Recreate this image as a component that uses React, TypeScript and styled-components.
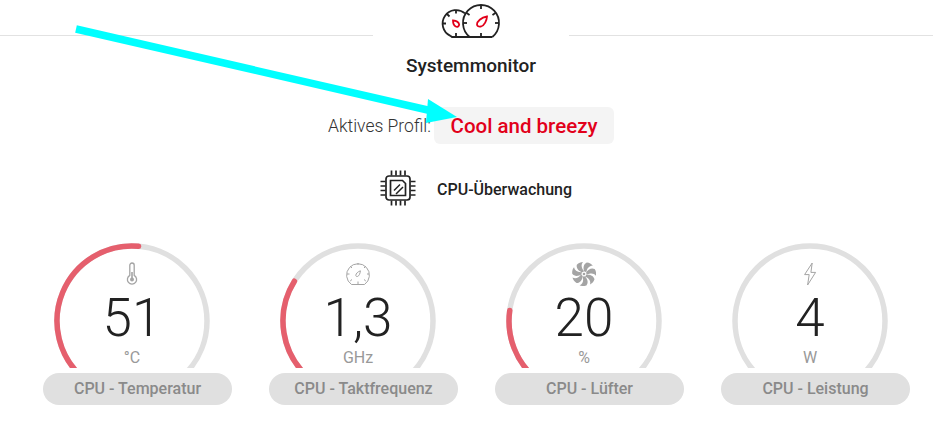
import React from "react";
import styled, { createGlobalStyle } from "styled-components";

const Global = createGlobalStyle`
  html, body { margin: 0; padding: 0; background: #fff; }
  body { font-family: Roboto, "Noto Sans", Arial, sans-serif; color: #222; }
  #root { width: 933px; height: 436px; overflow: hidden; }
`;

const Page = styled.div`
  position: relative;
  width: 933px;
  height: 436px;
  overflow: hidden;
`;

const Arrow = styled.svg`
  position: absolute;
  left: 0;
  top: 0;
  pointer-events: none;
  z-index: 2;
`;

const Header = styled.header`
  display: grid;
  grid-template-columns: 373px 196px 1fr;
  height: 107px;
`;

const Rule = styled.div`
  margin-top: 35px;
  height: 1px;
  background: #e2e2e2;
`;

const HeaderCenter = styled.div`
  padding-top: 4px;
  display: flex;
  flex-direction: column;
  align-items: center;
`;

const Title = styled.h1`
  margin: 16px 0 0;
  font-size: 19px;
  line-height: 24px;
  font-weight: 500;
  color: #222;
`;

const ProfileRow = styled.div`
  display: flex;
  align-items: center;
  height: 37px;
  padding-left: 328px;
`;

const ProfileLabel = styled.span`
  width: 106px;
  font-size: 17.5px;
  font-weight: 300;
  color: #333;
  white-space: nowrap;
`;

const ProfilePill = styled.div`
  width: 180px;
  height: 37px;
  box-sizing: border-box;
  background: #f4f4f4;
  border-radius: 6px;
  display: flex;
  align-items: center;
  justify-content: center;
  font-size: 20.5px;
  font-weight: 500;
  color: #e2001a;
`;

const SectionRow = styled.div`
  display: flex;
  align-items: center;
  height: 36px;
  margin-top: 26px;
  padding-left: 380px;
  gap: 21px;
`;

const SectionTitle = styled.h2`
  margin: 2px 0 0;
  font-size: 16px;
  font-weight: 500;
  color: #222;
`;

const GaugeGrid = styled.div`
  display: grid;
  grid-template-columns: repeat(4, 226px);
  padding-left: 24.5px;
  margin-top: 37px;
`;

const GaugeCell = styled.div`
  display: flex;
  flex-direction: column;
  align-items: flex-start;
`;

const GaugeFace = styled.div`
  position: relative;
  width: 156px;
  height: 124.5px;
  margin-left: 29.5px;
  overflow: hidden;
  display: flex;
  flex-direction: column;
  align-items: center;
  padding-top: 19px;
  box-sizing: border-box;
`;

const GaugeArc = styled.svg`
  position: absolute;
  left: 0;
  top: 0;
`;

const GaugeIcon = styled.svg`
  display: block;
  width: 24px;
  height: 24px;
  color: #a4a4a4;
`;

const GaugeValue = styled.div`
  margin-top: 3px;
  font-size: 53px;
  line-height: 58px;
  font-weight: 300;
  color: #222;
`;

const GaugeUnit = styled.div`
  margin-top: 2px;
  font-size: 16px;
  line-height: 18px;
  font-weight: 400;
  color: #999;
`;

const GaugeLabel = styled.div`
  width: 189px;
  height: 32px;
  margin-left: 18.5px;
  margin-top: 5px;
  border-radius: 16px;
  background: #e0e0e0;
  display: flex;
  align-items: center;
  justify-content: center;
  font-size: 16px;
  font-weight: 500;
  color: #8a8a8a;
`;

const R = 75;
const C = 78;

function arcPath(deg: number) {
  const startA = (-140 * Math.PI) / 180;
  const endA = (deg * Math.PI) / 180;
  const x0 = C + R * Math.sin(startA);
  const y0 = C - R * Math.cos(startA);
  const x1 = C + R * Math.sin(endA);
  const y1 = C - R * Math.cos(endA);
  const large = deg + 140 > 180 ? 1 : 0;
  return `M${x0} ${y0}A${R} ${R} 0 ${large} 1 ${x1} ${y1}`;
}

const Thermometer = () => (
  <GaugeIcon viewBox="0 0 24 24" fill="none" stroke="currentColor" strokeWidth="1.3">
    <path d="M9.8 13.4V3.2a2.2 2.2 0 0 1 4.4 0v10.2a4.6 4.6 0 1 1-4.4 0Z" />
    <path d="M12 10v7" strokeWidth="1.6" />
    <circle cx="12" cy="17.4" r="2" fill="currentColor" stroke="none" />
  </GaugeIcon>
);

const Speedo = () => (
  <GaugeIcon viewBox="0 0 24 24" fill="none" stroke="currentColor" strokeWidth="1">
    <path d="M5.500 22.500a11.400 11.400 0 1 1 13 0Z" />
    <path d="M12 1v2M12 19.500v3M1 12h2.500M21 12h2M4.300 4.300l1.700 1.700M19.700 4.300 18 6M4.200 19l1.800-1.500M19.800 19 18 17.500" />
    <path d="M9.800 13.400c0-1.800 2.200-3.800 4.600-4.600-.2 2.400-1.200 5.200-3 5.700-.9.2-1.600-.3-1.600-1.100Z" />
  </GaugeIcon>
);

const Fan = () => {
  const blades = [0, 51.4, 102.8, 154.3, 205.7, 257.1, 308.6];
  return (
    <GaugeIcon viewBox="0 0 24 24" fill="currentColor">
      {blades.map((a) => (
        <path
          key={a}
          transform={`rotate(${a} 12 12)`}
          d="M12.300 9.600C10.800 6.200 11.600 2 14.800.6c2.600.2 4.700 1.500 6 3.200-3.200-.2-5.800 2-6.500 6.700-.6-.5-1.300-.8-2-.9Z"
        />
      ))}
      <circle cx="12" cy="12" r="1.300" />
    </GaugeIcon>
  );
};

const Bolt = () => (
  <GaugeIcon viewBox="0 0 24 24" fill="none" stroke="currentColor" strokeWidth="1">
    <path d="M14.200 1 6.600 12.600h4.600L9.600 23l8-12.600h-4.700L14.200 1Z" />
  </GaugeIcon>
);

const gauges = [
  { label: "CPU - Temperatur", value: "51", unit: "°C", end: 5, Icon: Thermometer },
  { label: "CPU - Taktfrequenz", value: "1,3", unit: "GHz", end: -58, Icon: Speedo },
  { label: "CPU - Lüfter", value: "20", unit: "%", end: -82, Icon: Fan },
  { label: "CPU - Leistung", value: "4", unit: "W", end: null, Icon: Bolt },
];

const bigTicks = [-90, -55, 0, 55, 90];

const MonitorIcon = () => (
  <svg width="62" height="34" viewBox="0 0 62 34" fill="none" stroke="#222" strokeWidth="1.8">
    <path d="M10 31.600A13.500 13.500 0 1 1 25 9.400" />
    <path d="M10 31.600 12 33H52.300" />
    <path d="M29.700 33A18 18 0 1 1 52.300 33" />
    {bigTicks.map((a) => (
      <path key={a} transform={`rotate(${a} 41 19)`} d="M41 1v4" />
    ))}
    <path d="M41 29v4M16 6v3.500M2.500 19.500H6M7 10l2.500 2.500M16 29v4" />
    <path
      d="M37 20.500c0-3 4-7 10-8-.3 4-2.500 9-6 10-2.300.5-4-.4-4-2Z"
      stroke="#e2001a"
      strokeWidth="1.8"
    />
    <path
      d="M13 16.500c2.800.2 5.800 1.600 6.200 4.200-.2 1.800-2 2.600-3.400 1.800-1.800-1-2.800-3.400-2.800-6Z"
      stroke="#e2001a"
      strokeWidth="1.8"
    />
  </svg>
);

const CpuIcon = () => (
  <svg width="36" height="36" viewBox="0 0 36 36" fill="none" stroke="#222" strokeWidth="1.7">
    <rect x="6" y="6" width="24" height="24" rx="3" />
    <path d="M10.500 10.500h12l3 3v12h-15Z" />
    <path d="M14 20.500l6-6M16 24l7-7" strokeWidth="1.500" />
    <path d="M11.500 0.500v5M16 0.500v5M20.500 0.500v5M25 0.500v5M11.500 30.500v5M16 30.500v5M20.500 30.500v5M25 30.500v5M0.500 11.500h5M0.500 16h5M0.500 20.500h5M0.500 25h5M30.500 11.500h5M30.500 16h5M30.500 20.500h5M30.500 25h5" />
  </svg>
);

export default function App() {
  return (
    <Page>
      <Global />
      <Header>
        <Rule />
        <HeaderCenter>
          <MonitorIcon />
          <Title>Systemmonitor</Title>
        </HeaderCenter>
        <Rule />
      </Header>
      <ProfileRow>
        <ProfileLabel>Aktives Profil:</ProfileLabel>
        <ProfilePill>Cool and breezy</ProfilePill>
      </ProfileRow>
      <SectionRow>
        <CpuIcon />
        <SectionTitle>CPU-Überwachung</SectionTitle>
      </SectionRow>
      <GaugeGrid>
        {gauges.map(({ label, value, unit, end, Icon }) => (
          <GaugeCell key={label}>
            <GaugeFace>
              <GaugeArc width="156" height="156" viewBox="0 0 156 156" fill="none" strokeWidth="5.5">
                <circle cx={C} cy={C} r={R} stroke="#e0e0e0" />
                {end !== null && <path d={arcPath(end)} stroke="#e55f6d" strokeLinecap="round" />}
              </GaugeArc>
              <Icon />
              <GaugeValue>{value}</GaugeValue>
              <GaugeUnit>{unit}</GaugeUnit>
            </GaugeFace>
            <GaugeLabel>{label}</GaugeLabel>
          </GaugeCell>
        ))}
      </GaugeGrid>
      <Arrow width="933" height="436" viewBox="0 0 933 436">
        <path d="M76 29 432 111" stroke="#00ffff" strokeWidth="7.5" fill="none" />
        <path d="M457 117 428 99 426 123Z" fill="#00ffff" />
      </Arrow>
    </Page>
  );
}
